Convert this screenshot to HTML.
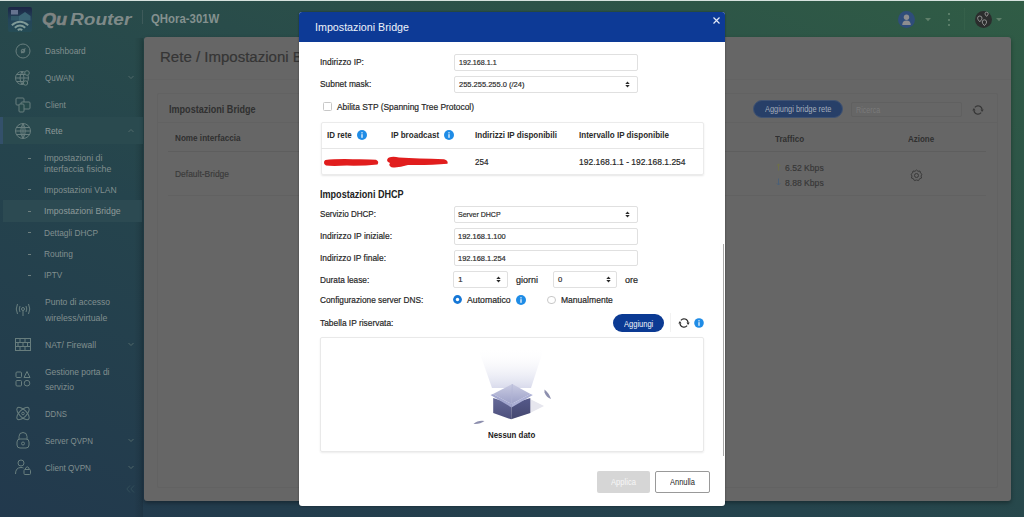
<!DOCTYPE html>
<html><head><meta charset="utf-8">
<style>
*{box-sizing:border-box;margin:0;padding:0}
html,body{width:1024px;height:517px;overflow:hidden;background:#28404a;font-family:"Liberation Sans",sans-serif}
.a{position:absolute;white-space:nowrap;line-height:1;transform-origin:0 0}
.b{position:absolute}
.ico{position:absolute;overflow:visible}
</style></head><body>
<div class="b" style="left:0;top:0;width:1024px;height:517px;background:linear-gradient(205deg,#305c45 0%,#294c4a 40%,#25444d 62%,#22394d 100%)"></div>
<div class="b" style="left:0;top:0;width:1024px;height:1px;background:#d6e2de"></div>
<div class="b" style="left:134px;top:38px;width:9px;height:479px;background:linear-gradient(90deg,rgba(0,0,0,0),rgba(0,0,0,.12))"></div>

<!-- ===== header ===== -->
<svg class="ico" style="left:8px;top:7px" width="25" height="25" viewBox="0 0 25 25">
  <defs><linearGradient id="lg" x1="0" y1="0" x2="0" y2="1"><stop offset="0" stop-color="#1b2545"/><stop offset="0.5" stop-color="#24445a"/><stop offset="1" stop-color="#254c55"/></linearGradient></defs>
  <rect x="0" y="0" width="24" height="25" rx="2" fill="url(#lg)"/>
  <rect x="3" y="3" width="7" height="4.5" fill="#65738f"/>
  <path d="M11 9 L17 5 L22.5 9 L22.5 13.5 L11 13.5Z" fill="#3a6474"/>
  <path d="M3 9 H11 V13.5 H3Z" fill="#335e6c" opacity=".8"/>
  <path d="M3.8 18.2 Q12 11.2 20.2 18.2" stroke="#7f9a98" stroke-width="1.9" fill="none"/>
  <path d="M6.8 20.8 Q12 16.4 17.2 20.8" stroke="#7f9a98" stroke-width="1.9" fill="none"/>
  <path d="M9.8 23.2 Q12 21.2 14.2 23.2" stroke="#7f9a98" stroke-width="1.9" fill="none"/>
</svg>
<div class="a" style="left:41.9px;top:11.7px;font-size:16px;font-style:italic;font-weight:bold;color:#7f8483;-webkit-text-stroke:0.5px #7f8483;transform:scaleX(1.13)">Qu</div>
<div class="a" style="left:69.5px;top:11.7px;font-size:16px;font-style:italic;font-weight:bold;color:#7f8a89;transform:scaleX(1.19)">Router</div>
<div class="b" style="left:142px;top:10px;width:1px;height:14px;background:#3e5a5a"></div>

<svg class="ico" style="left:897px;top:10px" width="20" height="20" viewBox="0 0 20 20">
  <circle cx="9.5" cy="9.5" r="8.5" fill="#2f4d7a"/>
  <circle cx="9.5" cy="7.2" r="2.7" fill="#8d8d8f"/>
  <path d="M5.2 15 Q5.5 10.6 9.5 10.6 Q13.5 10.6 13.8 15Z" fill="#8d8d8f"/>
</svg>
<svg class="ico" style="left:924.5px;top:17.5px" width="6" height="4" viewBox="0 0 6 4"><path d="M0 0H6L3 3.2Z" fill="#5f7f6a"/></svg>
<div class="b" style="left:948px;top:13px;width:2px;height:2px;border-radius:1px;background:#698a74"></div>
<div class="b" style="left:948px;top:18.5px;width:2px;height:2px;border-radius:1px;background:#698a74"></div>
<div class="b" style="left:948px;top:24px;width:2px;height:2px;border-radius:1px;background:#698a74"></div>
<div class="b" style="left:964px;top:8px;width:1px;height:22px;background:#35604a"></div>
<svg class="ico" style="left:974px;top:10px" width="20" height="20" viewBox="0 0 20 20">
  <circle cx="9.5" cy="9.5" r="8.5" fill="#2b2d2d"/>
  <path d="M5.8 11.8 Q3.6 9.6 3.6 8.2 A2.2 2.2 0 0 1 8 8.2 Q8 9.6 5.8 11.8Z" fill="none" stroke="#9c9c9c" stroke-width="0.9"/>
  <path d="M10.4 15.6 Q8.2 13.4 8.2 12 A2.2 2.2 0 0 1 12.6 12 Q12.6 13.4 10.4 15.6Z" fill="none" stroke="#9c9c9c" stroke-width="0.9"/>
  <path d="M12.6 6.4 Q11 4.8 11 3.8 A1.6 1.6 0 0 1 14.2 3.8 Q14.2 4.8 12.6 6.4Z" fill="none" stroke="#9c9c9c" stroke-width="0.9"/>
</svg>
<svg class="ico" style="left:996px;top:17.5px" width="6" height="4" viewBox="0 0 6 4"><path d="M0 0H6L3 3.2Z" fill="#5f7f6a"/></svg>

<div class="a" style="left:151.00px;top:13.40px;font-size:12.7px;color:#84918f;font-weight:bold;transform:scaleX(0.897);">QHora-301W</div>
<!-- ===== sidebar ===== -->
<div class="b" style="left:0;top:117px;width:143px;height:27px;background:#2a4a4f"></div>
<div class="b" style="left:0;top:117px;width:2.5px;height:27px;background:#33506a"></div>
<div class="b" style="left:3px;top:200px;width:139px;height:22px;background:#2c4a52"></div>

<svg class="ico" style="left:14px;top:42px" width="18" height="18" viewBox="0 0 18 18" fill="none" stroke="#687e7e" stroke-width="1">
  <circle cx="9" cy="9" r="7"/><path d="M7 11 L11 6.5 L10 9.5Z"/><circle cx="9" cy="9" r="1.8"/>
</svg>

<svg class="ico" style="left:14px;top:69px" width="18" height="18" viewBox="0 0 18 18" fill="none" stroke="#687e7e" stroke-width="1">
  <circle cx="8" cy="9" r="6.5"/><path d="M1.5 9 H14.5 M8 2.5 Q4 9 8 15.5 M8 2.5 Q12 9 8 15.5 M3 5.5 H13 M3 12.5 H13"/><circle cx="13" cy="4" r="2.3" fill="#274a4b"/><circle cx="11.5" cy="14" r="2.2" fill="#274a4b"/>
</svg>
<svg class="ico" style="left:127px;top:75px" width="8" height="5" viewBox="0 0 8 5" fill="none" stroke="#566c6c" stroke-width="0.9"><path d="M1.5 1 L4 3.5 L6.5 1"/></svg>

<svg class="ico" style="left:14px;top:96px" width="18" height="18" viewBox="0 0 18 18" fill="none" stroke="#687e7e" stroke-width="1">
  <rect x="2" y="2" width="8" height="7" rx="1"/><rect x="7" y="6" width="9" height="7" rx="1" fill="#274a4b"/><rect x="5" y="8" width="5" height="8" rx="1" fill="#274a4b"/>
</svg>

<svg class="ico" style="left:14px;top:122px" width="18" height="18" viewBox="0 0 18 18" fill="none" stroke="#687e7e" stroke-width="1">
  <circle cx="9" cy="9" r="7.5"/><path d="M1.5 9 H16.5 M9 1.5 Q4.5 9 9 16.5 M9 1.5 Q13.5 9 9 16.5 M2.5 5.5 H15.5 M2.5 12.5 H15.5 M9 1.5 V16.5"/>
</svg>
<svg class="ico" style="left:127px;top:128px" width="8" height="5" viewBox="0 0 8 5" fill="none" stroke="#566c6c" stroke-width="0.9"><path d="M1.5 4 L4 1.5 L6.5 4"/></svg>


<svg class="ico" style="left:14px;top:301px" width="18" height="18" viewBox="0 0 18 18" fill="none" stroke="#687e7e" stroke-width="1">
  <circle cx="9" cy="8" r="1.5"/><path d="M9 9.5 V15 M6 5 Q4.5 8 6 11 M12 5 Q13.5 8 12 11 M3.5 3 Q1 8 3.5 13 M14.5 3 Q17 8 14.5 13"/>
</svg>

<svg class="ico" style="left:14px;top:336px" width="18" height="18" viewBox="0 0 18 18" fill="none" stroke="#687e7e" stroke-width="1">
  <rect x="1.5" y="2.5" width="15" height="12"/><path d="M1.5 6.5 H16.5 M1.5 10.5 H16.5 M6 2.5 V6.5 M11 2.5 V6.5 M4 6.5 V10.5 M9 6.5 V10.5 M13.5 6.5 V10.5 M6 10.5 V14.5 M11 10.5 V14.5"/>
</svg>
<svg class="ico" style="left:127px;top:342px" width="8" height="5" viewBox="0 0 8 5" fill="none" stroke="#566c6c" stroke-width="0.9"><path d="M1.5 1 L4 3.5 L6.5 1"/></svg>

<svg class="ico" style="left:14px;top:370px" width="18" height="18" viewBox="0 0 18 18" fill="none" stroke="#687e7e" stroke-width="1">
  <rect x="2" y="2" width="5.5" height="5.5" rx="1"/><path d="M13 1.5 L16 7.5 H10Z"/><rect x="2" y="10.5" width="5.5" height="5.5" rx="1"/><circle cx="13" cy="13.2" r="2.8"/>
</svg>

<svg class="ico" style="left:14px;top:405px" width="18" height="18" viewBox="0 0 18 18" fill="none" stroke="#687e7e" stroke-width="1">
  <ellipse cx="9" cy="8.5" rx="8" ry="3.6" transform="rotate(45 9 8.5)"/><ellipse cx="9" cy="8.5" rx="8" ry="3.6" transform="rotate(-45 9 8.5)"/><circle cx="9" cy="8.5" r="1.3"/>
</svg>

<svg class="ico" style="left:14px;top:431px" width="18" height="18" viewBox="0 0 18 18" fill="none" stroke="#687e7e" stroke-width="1">
  <path d="M5 8 V5.5 Q5 1.5 9 1.5 Q13 1.5 13 5.5 V8"/><rect x="3" y="8" width="12" height="9" rx="3"/><circle cx="9" cy="12.5" r="1.5"/>
</svg>
<svg class="ico" style="left:127px;top:438px" width="8" height="5" viewBox="0 0 8 5" fill="none" stroke="#566c6c" stroke-width="0.9"><path d="M1.5 1 L4 3.5 L6.5 1"/></svg>

<svg class="ico" style="left:14px;top:458px" width="18" height="18" viewBox="0 0 18 18" fill="none" stroke="#687e7e" stroke-width="1">
  <circle cx="7" cy="5" r="3"/><path d="M1.5 16 Q1.5 9.5 7 9.5 Q8.5 9.5 9.5 10"/><rect x="10" y="11.5" width="6.5" height="5" rx="1"/><path d="M11.5 11.5 V10 Q13.2 7.5 15 10 V11.5"/>
</svg>
<svg class="ico" style="left:127px;top:465px" width="8" height="5" viewBox="0 0 8 5" fill="none" stroke="#566c6c" stroke-width="0.9"><path d="M1.5 1 L4 3.5 L6.5 1"/></svg>

<svg class="ico" style="left:126px;top:485px" width="9" height="8" viewBox="0 0 9 8" fill="none" stroke="#34505a" stroke-width="0.9"><path d="M4 0.5 L0.8 4 L4 7.5 M8 0.5 L4.8 4 L8 7.5"/></svg>


<div class="a" style="left:45.00px;top:47.45px;font-size:9px;color:#818f8f;transform:scaleX(0.924);">Dashboard</div>
<div class="a" style="left:45.00px;top:73.75px;font-size:9px;color:#818f8f;transform:scaleX(0.888);">QuWAN</div>
<div class="a" style="left:45.00px;top:100.65px;font-size:9px;color:#818f8f;transform:scaleX(0.904);">Client</div>
<div class="a" style="left:45.00px;top:126.95px;font-size:9px;color:#8e9a9a;transform:scaleX(0.920);">Rete</div>
<div class="a" style="left:43.80px;top:154.05px;font-size:9px;color:#818f8f;transform:scaleX(0.973);">Impostazioni di</div>
<div class="a" style="left:43.80px;top:164.85px;font-size:9px;color:#818f8f;transform:scaleX(0.975);">interfaccia fisiche</div>
<div class="a" style="left:43.80px;top:185.75px;font-size:9px;color:#818f8f;transform:scaleX(0.948);">Impostazioni VLAN</div>
<div class="a" style="left:43.80px;top:207.15px;font-size:9px;color:#8e9a9a;transform:scaleX(0.969);">Impostazioni Bridge</div>
<div class="a" style="left:43.80px;top:228.65px;font-size:9px;color:#818f8f;transform:scaleX(0.923);">Dettagli DHCP</div>
<div class="a" style="left:43.80px;top:249.55px;font-size:9px;color:#818f8f;transform:scaleX(0.931);">Routing</div>
<div class="a" style="left:43.80px;top:271.15px;font-size:9px;color:#818f8f;transform:scaleX(0.904);">IPTV</div>
<div class="a" style="left:45.10px;top:298.05px;font-size:9px;color:#818f8f;transform:scaleX(0.950);">Punto di accesso</div>
<div class="a" style="left:45.10px;top:314.05px;font-size:9px;color:#818f8f;transform:scaleX(0.973);">wireless/virtuale</div>
<div class="a" style="left:45.10px;top:341.05px;font-size:9px;color:#818f8f;transform:scaleX(0.958);">NAT/ Firewall</div>
<div class="a" style="left:45.10px;top:367.85px;font-size:9px;color:#818f8f;transform:scaleX(0.941);">Gestione porta di</div>
<div class="a" style="left:45.10px;top:383.45px;font-size:9px;color:#818f8f;transform:scaleX(0.947);">servizio</div>
<div class="a" style="left:45.10px;top:410.05px;font-size:9px;color:#818f8f;transform:scaleX(0.858);">DDNS</div>
<div class="a" style="left:45.10px;top:437.05px;font-size:9px;color:#818f8f;transform:scaleX(0.879);">Server QVPN</div>
<div class="a" style="left:45.10px;top:463.65px;font-size:9px;color:#818f8f;transform:scaleX(0.901);">Client QVPN</div>
<div class="b" style="left:27.5px;top:157.5px;width:3px;height:1px;background:#6f8080"></div>
<div class="b" style="left:27.5px;top:189.0px;width:3px;height:1px;background:#6f8080"></div>
<div class="b" style="left:27.5px;top:211.0px;width:3px;height:1px;background:#6f8080"></div>
<div class="b" style="left:27.5px;top:232.0px;width:3px;height:1px;background:#6f8080"></div>
<div class="b" style="left:27.5px;top:253.5px;width:3px;height:1px;background:#6f8080"></div>
<div class="b" style="left:27.5px;top:275.0px;width:3px;height:1px;background:#6f8080"></div>
<div class="b" style="left:144px;top:37px;width:867px;height:464px;background:#666;border-radius:3px;box-shadow:0 2px 4px rgba(0,0,0,.35)"></div>
<div class="b" style="left:144px;top:79px;width:867px;height:1px;background:#636363"></div>
<div class="b" style="left:157px;top:93px;width:841px;height:395px;border:1px solid #626262;border-radius:2px"></div>
<div class="b" style="left:158px;top:122px;width:839px;height:1px;background:#626262"></div>
<div class="b" style="left:168px;top:151px;width:818px;height:1px;background:#5e5e5e"></div>
<div class="b" style="left:168px;top:195px;width:818px;height:1px;background:#616161"></div>
<div class="b" style="left:753px;top:100px;width:90px;height:18px;border-radius:9px;background:#273f68;border:1px solid #3f5272"></div>
<div class="b" style="left:850.5px;top:101.5px;width:111px;height:15px;border:1px solid #606060;border-radius:2px"></div>

<svg class="ico" style="left:971.8px;top:103.6px" width="12" height="12" viewBox="0 0 12 12" fill="none" stroke="#363636" stroke-width="1.1">
  <path d="M2.86 3.36 A4.1 4.1 0 0 1 10.08 5.64"/><path d="M9.14 8.64 A4.1 4.1 0 0 1 1.92 6.36"/>
  <path d="M8.5 5.5 L11.7 5.5 L10.1 7.9Z" fill="#363636" stroke="none"/><path d="M0.3 6.5 L3.5 6.5 L1.9 4.1Z" fill="#363636" stroke="none"/>
</svg>
<svg class="ico" style="left:776px;top:163px" width="5" height="8" viewBox="0 0 5 8" fill="none" stroke="#6f7048" stroke-width="1"><path d="M2.5 7.5 V1 M0.8 2.7 L2.5 1 L4.2 2.7"/></svg>
<svg class="ico" style="left:776px;top:177.5px" width="5" height="8" viewBox="0 0 5 8" fill="none" stroke="#4a6078" stroke-width="1"><path d="M2.5 0.5 V7 M0.8 5.3 L2.5 7 L4.2 5.3"/></svg>
<svg class="ico" style="left:910px;top:168.5px" width="13" height="13" viewBox="0 0 13 13" fill="none" stroke="#3a3a3a" stroke-width="1">
  <path d="M6.5 1 L8 2.3 L10 2 L10.4 4 L12 5.3 L11 7 L11.6 9 L9.6 9.7 L8.6 11.6 L6.5 11 L4.4 11.6 L3.4 9.7 L1.4 9 L2 7 L1 5.3 L2.6 4 L3 2 L5 2.3Z"/><circle cx="6.5" cy="6.5" r="2"/>
</svg>

<div class="a" style="left:160.30px;top:48.61px;font-size:15.4px;color:#353535;transform:scaleX(0.976);-webkit-text-stroke:0.2px #353535;">Rete / Impostazioni Bridge</div>
<div class="a" style="left:168.60px;top:105.02px;font-size:10.1px;color:#303030;font-weight:bold;transform:scaleX(0.897);">Impostazioni Bridge</div>
<div class="a" style="left:765.10px;top:105.45px;font-size:9px;color:#a5adbb;transform:scaleX(0.824);">Aggiungi bridge rete</div>
<div class="a" style="left:855.50px;top:105.58px;font-size:8.5px;color:#7a7a7a;transform:scaleX(0.840);">Ricerca</div>
<div class="a" style="left:175.20px;top:134.45px;font-size:9px;color:#303030;font-weight:bold;transform:scaleX(0.904);">Nome interfaccia</div>
<div class="a" style="left:774.70px;top:134.55px;font-size:9px;color:#303030;font-weight:bold;transform:scaleX(0.895);">Traffico</div>
<div class="a" style="left:908.40px;top:134.55px;font-size:9px;color:#303030;font-weight:bold;transform:scaleX(0.888);">Azione</div>
<div class="a" style="left:175.00px;top:169.90px;font-size:9.3px;color:#3a3a3a;-webkit-text-stroke:0.15px #3a3a3a;transform:scaleX(0.909);">Default-Bridge</div>
<div class="a" style="left:785.30px;top:163.13px;font-size:9.5px;color:#363636;-webkit-text-stroke:0.15px #363636;transform:scaleX(0.904);">6.52 Kbps</div>
<div class="a" style="left:785.30px;top:178.03px;font-size:9.5px;color:#363636;-webkit-text-stroke:0.15px #363636;transform:scaleX(0.904);">8.88 Kbps</div>
<div class="b" style="left:299px;top:12px;width:426px;height:494px;background:#fff;border-radius:3px;box-shadow:0 0 2px rgba(0,0,0,.45)"></div>
<div class="b" style="left:299px;top:12px;width:426px;height:30px;background:#0d3a96;border-radius:3px 3px 0 0"></div>

<svg class="ico" style="left:713.4px;top:16.5px" width="7" height="7" viewBox="0 0 7 7" stroke="#e4eaf7" stroke-width="1.2"><path d="M0.5 0.5 L6.5 6.5 M6.5 0.5 L0.5 6.5"/></svg>
<div class="b" style="left:453.5px;top:54px;width:184px;height:16.5px;border:1px solid #e0e0e0;border-radius:2px"></div>
<div class="b" style="left:453.5px;top:76px;width:184px;height:16.5px;border:1px solid #e0e0e0;border-radius:2px"></div>
<svg class="ico" style="left:625px;top:80.6px" width="5" height="7" viewBox="0 0 5 7"><path d="M0.3 2.9 L2.5 0.4 L4.7 2.9Z M0.3 4.1 L2.5 6.6 L4.7 4.1Z" fill="#2a2a2a"/></svg>
<div class="b" style="left:322.5px;top:102px;width:9px;height:9px;border:1px solid #c8c8c8;border-radius:1.5px"></div>

<div class="b" style="left:320.5px;top:121.5px;width:383.5px;height:53.5px;border:1px solid #ebebeb;border-radius:2px;box-shadow:0 1px 2px rgba(0,0,0,.10)"></div>
<div class="b" style="left:321px;top:148px;width:382.5px;height:1px;background:#e6e6e6"></div>
<svg class="ico" style="left:357.3px;top:130px" width="10" height="10" viewBox="0 0 10 10"><circle cx="5" cy="5" r="5" fill="#1f8ce6"/><rect x="4.4" y="4.2" width="1.2" height="3.6" fill="#fff"/><rect x="4.4" y="2.2" width="1.2" height="1.2" fill="#fff"/></svg>
<svg class="ico" style="left:444px;top:130px" width="10" height="10" viewBox="0 0 10 10"><circle cx="5" cy="5" r="5" fill="#1f8ce6"/><rect x="4.4" y="4.2" width="1.2" height="3.6" fill="#fff"/><rect x="4.4" y="2.2" width="1.2" height="1.2" fill="#fff"/></svg>
<svg class="ico" style="left:323px;top:156px" width="58" height="12" viewBox="0 0 58 12"><path d="M2.5 4 Q12 2.8 30 3.2 Q48 3 53 3.8 Q56.5 5.5 54.5 8.5 Q40 10 24 9.6 Q8 10.2 3 9.5 Q0.5 8 1 6 Q1.3 4.5 2.5 4Z" fill="#e11d1d"/></svg>
<svg class="ico" style="left:386px;top:154.5px" width="64" height="14" viewBox="0 0 64 14"><path d="M3 2.5 Q7 0.8 13 2.5 Q32 3.5 58 4.2 Q62.5 5.5 61.5 8.8 Q45 10.3 22 10 Q12 13.2 5.5 12.2 Q2 10.5 4 8 Q0.5 6.5 1.2 4.5 Q1.8 3 3 2.5Z" fill="#e11d1d"/></svg>

<div class="b" style="left:453.5px;top:206px;width:184px;height:16.5px;border:1px solid #e0e0e0;border-radius:2px"></div>
<svg class="ico" style="left:625px;top:210.6px" width="5" height="7" viewBox="0 0 5 7"><path d="M0.3 2.9 L2.5 0.4 L4.7 2.9Z M0.3 4.1 L2.5 6.6 L4.7 4.1Z" fill="#2a2a2a"/></svg>
<div class="b" style="left:453.5px;top:228px;width:184px;height:16.5px;border:1px solid #e0e0e0;border-radius:2px"></div>
<div class="b" style="left:453.5px;top:249.8px;width:184px;height:16.5px;border:1px solid #e0e0e0;border-radius:2px"></div>
<div class="b" style="left:453.3px;top:271.3px;width:54.5px;height:16.5px;border:1px solid #e0e0e0;border-radius:2px"></div>
<svg class="ico" style="left:495.5px;top:276.3px" width="5" height="7" viewBox="0 0 5 7"><path d="M0.3 2.9 L2.5 0.4 L4.7 2.9Z M0.3 4.1 L2.5 6.6 L4.7 4.1Z" fill="#2a2a2a"/></svg>
<div class="b" style="left:553.2px;top:271.3px;width:63.6px;height:16.5px;border:1px solid #e0e0e0;border-radius:2px"></div>
<svg class="ico" style="left:605.5px;top:276.3px" width="5" height="7" viewBox="0 0 5 7"><path d="M0.3 2.9 L2.5 0.4 L4.7 2.9Z M0.3 4.1 L2.5 6.6 L4.7 4.1Z" fill="#2a2a2a"/></svg>

<svg class="ico" style="left:453.2px;top:295.4px" width="9" height="9" viewBox="0 0 9 9"><circle cx="4.5" cy="4.5" r="4.4" fill="#1677d6"/><circle cx="4.5" cy="4.5" r="1.7" fill="#fff"/></svg>
<svg class="ico" style="left:516px;top:294.8px" width="10" height="10" viewBox="0 0 10 10"><circle cx="5" cy="5" r="5" fill="#1f8ce6"/><rect x="4.4" y="4.2" width="1.2" height="3.6" fill="#fff"/><rect x="4.4" y="2.2" width="1.2" height="1.2" fill="#fff"/></svg>
<div class="b" style="left:547px;top:295.5px;width:8.6px;height:8.6px;border-radius:50%;border:1px solid #c8c8c8"></div>

<div class="b" style="left:612.7px;top:314.1px;width:51.8px;height:17.6px;border-radius:9px;background:#0b3a93"></div>
<div class="b" style="left:670.3px;top:313px;width:1px;height:19px;background:#f2f2f2"></div>
<svg class="ico" style="left:678.1px;top:316.9px" width="12" height="12" viewBox="0 0 12 12" fill="none" stroke="#2b2b2b" stroke-width="1.1">
  <path d="M2.86 3.36 A4.1 4.1 0 0 1 10.08 5.64"/><path d="M9.14 8.64 A4.1 4.1 0 0 1 1.92 6.36"/>
  <path d="M8.5 5.5 L11.7 5.5 L10.1 7.9Z" fill="#2b2b2b" stroke="none"/><path d="M0.3 6.5 L3.5 6.5 L1.9 4.1Z" fill="#2b2b2b" stroke="none"/>
</svg>
<svg class="ico" style="left:694.2px;top:318.2px" width="10" height="10" viewBox="0 0 10 10"><circle cx="5" cy="5" r="4.8" fill="#1f8ce6"/><rect x="4.4" y="4.2" width="1.2" height="3.6" fill="#fff"/><rect x="4.4" y="2.2" width="1.2" height="1.2" fill="#fff"/></svg>

<div class="b" style="left:320px;top:337.4px;width:384px;height:115px;border:1px solid #e9e9e9;border-radius:2px;box-shadow:0 1px 2px rgba(0,0,0,.08)"></div>
<svg class="ico" style="left:469px;top:344px" width="90" height="84" viewBox="0 0 90 84">
  <defs>
    <linearGradient id="beam" x1="0" y1="0" x2="0" y2="1"><stop offset="0" stop-color="#ffffff" stop-opacity="0"/><stop offset="1" stop-color="#d9dbec"/></linearGradient>
    <linearGradient id="front" x1="0" y1="0" x2="0" y2="1"><stop offset="0" stop-color="#666a98"/><stop offset="1" stop-color="#4c4f7c"/></linearGradient>
    <linearGradient id="side" x1="0" y1="0" x2="0" y2="1"><stop offset="0" stop-color="#55598a"/><stop offset="1" stop-color="#44476f"/></linearGradient>
    <linearGradient id="inner" x1="0" y1="0" x2="0" y2="1"><stop offset="0" stop-color="#c9cbe2"/><stop offset="1" stop-color="#9da1c8"/></linearGradient>
  </defs>
  <path d="M9 4 H75 L62 44 H23Z" fill="url(#beam)"/>
  <path d="M42 75 L61 69 L75 62 L61 55Z" fill="#e6e6ee"/>
  <path d="M24.2 54 L42.5 60 L42.2 75.3 L24.2 69Z" fill="url(#front)"/>
  <path d="M42.5 60 L61.3 54 L61.3 69 L42.2 75.3Z" fill="url(#side)"/>
  <path d="M43.3 40 L61.5 50 L42.5 60 L24 50Z" fill="url(#inner)"/>
  <path d="M43.3 40 L42.5 60" stroke="#b0b3d3" stroke-width="0.6"/>
  <path d="M21.5 51 L24 50 L42.5 60 L42.5 63.5Z" fill="#a3a7cf"/>
  <path d="M63.8 51 L61.5 50 L42.5 60 L42.5 63.5Z" fill="#abafd5"/>
  <path d="M75.5 45.5 Q80 49 82 55 Q77.5 53.5 75.5 48.5Z" fill="#8d8fae"/>
  <path d="M4.5 80 Q9 76 15.5 77 Q11 80.5 4.5 80Z" fill="#8d8fae"/>
</svg>

<div class="b" style="left:722.6px;top:244px;width:1.2px;height:212px;background:#a8a8a8"></div>

<div class="b" style="left:597px;top:471px;width:53px;height:21.5px;border-radius:2px;background:#d6d6d6"></div>
<div class="b" style="left:655px;top:471px;width:54.5px;height:21.5px;border-radius:2px;border:1px solid #999;background:#fff"></div>

<div class="a" style="left:315.00px;top:22.25px;font-size:11px;color:#eef2fa;transform:scaleX(0.973);">Impostazioni Bridge</div>
<div class="a" style="left:320.10px;top:58.30px;font-size:9.3px;color:#262626;-webkit-text-stroke:0.2px #262626;transform:scaleX(0.904);">Indirizzo IP:</div>
<div class="a" style="left:320.10px;top:79.80px;font-size:9.3px;color:#262626;-webkit-text-stroke:0.2px #262626;transform:scaleX(0.901);">Subnet mask:</div>
<div class="a" style="left:337.00px;top:103.49px;font-size:9.3px;color:#262626;-webkit-text-stroke:0.2px #262626;transform:scaleX(0.903);">Abilita STP (Spanning Tree Protocol)</div>
<div class="a" style="left:327.20px;top:131.09px;font-size:9.3px;color:#2a2a2a;font-weight:bold;transform:scaleX(0.857);">ID rete</div>
<div class="a" style="left:390.70px;top:131.09px;font-size:9.3px;color:#2a2a2a;font-weight:bold;transform:scaleX(0.866);">IP broadcast</div>
<div class="a" style="left:474.60px;top:131.09px;font-size:9.3px;color:#2a2a2a;font-weight:bold;transform:scaleX(0.864);">Indirizzi IP disponibili</div>
<div class="a" style="left:579.30px;top:131.09px;font-size:9.3px;color:#2a2a2a;font-weight:bold;transform:scaleX(0.864);">Intervallo IP disponibile</div>
<div class="a" style="left:474.60px;top:158.40px;font-size:9.3px;color:#262626;-webkit-text-stroke:0.2px #262626;transform:scaleX(0.864);">254</div>
<div class="a" style="left:579.30px;top:158.40px;font-size:9.3px;color:#262626;-webkit-text-stroke:0.2px #262626;transform:scaleX(0.912);">192.168.1.1 - 192.168.1.254</div>
<div class="a" style="left:320.30px;top:188.92px;font-size:10.8px;color:#222;font-weight:bold;transform:scaleX(0.840);">Impostazioni DHCP</div>
<div class="a" style="left:320.20px;top:210.09px;font-size:9.3px;color:#262626;-webkit-text-stroke:0.2px #262626;transform:scaleX(0.867);">Servizio DHCP:</div>
<div class="a" style="left:320.20px;top:232.09px;font-size:9.3px;color:#262626;-webkit-text-stroke:0.2px #262626;transform:scaleX(0.907);">Indirizzo IP iniziale:</div>
<div class="a" style="left:320.20px;top:254.20px;font-size:9.3px;color:#262626;-webkit-text-stroke:0.2px #262626;transform:scaleX(0.901);">Indirizzo IP finale:</div>
<div class="a" style="left:320.20px;top:275.70px;font-size:9.3px;color:#262626;-webkit-text-stroke:0.2px #262626;transform:scaleX(0.891);">Durata lease:</div>
<div class="a" style="left:320.20px;top:295.90px;font-size:9.3px;color:#262626;-webkit-text-stroke:0.2px #262626;transform:scaleX(0.892);">Configurazione server DNS:</div>
<div class="a" style="left:320.20px;top:318.70px;font-size:9.3px;color:#262626;-webkit-text-stroke:0.2px #262626;transform:scaleX(0.901);">Tabella IP riservata:</div>
<div class="a" style="left:458.70px;top:58.95px;font-size:7.7px;color:#333;-webkit-text-stroke:0.2px #262626;transform:scaleX(0.926);">192.168.1.1</div>
<div class="a" style="left:458.50px;top:81.16px;font-size:7.7px;color:#333;-webkit-text-stroke:0.2px #262626;transform:scaleX(0.975);">255.255.255.0 (/24)</div>
<div class="a" style="left:458.20px;top:210.96px;font-size:7.7px;color:#333;-webkit-text-stroke:0.2px #262626;transform:scaleX(0.915);">Server DHCP</div>
<div class="a" style="left:458.20px;top:233.06px;font-size:7.7px;color:#333;-webkit-text-stroke:0.2px #262626;transform:scaleX(0.970);">192.168.1.100</div>
<div class="a" style="left:458.20px;top:255.06px;font-size:7.7px;color:#333;-webkit-text-stroke:0.2px #262626;transform:scaleX(0.970);">192.168.1.254</div>
<div class="a" style="left:458.20px;top:276.25px;font-size:7.7px;color:#333;-webkit-text-stroke:0.2px #262626;">1</div>
<div class="a" style="left:558.00px;top:276.25px;font-size:7.7px;color:#333;-webkit-text-stroke:0.2px #262626;">0</div>
<div class="a" style="left:515.80px;top:275.70px;font-size:9.3px;color:#262626;-webkit-text-stroke:0.2px #262626;transform:scaleX(0.967);">giorni</div>
<div class="a" style="left:624.70px;top:275.70px;font-size:9.3px;color:#262626;-webkit-text-stroke:0.2px #262626;transform:scaleX(0.967);">ore</div>
<div class="a" style="left:466.90px;top:295.90px;font-size:9.3px;color:#262626;-webkit-text-stroke:0.2px #262626;transform:scaleX(0.937);">Automatico</div>
<div class="a" style="left:560.70px;top:295.90px;font-size:9.3px;color:#262626;-webkit-text-stroke:0.2px #262626;transform:scaleX(0.919);">Manualmente</div>
<div class="a" style="left:624.00px;top:319.57px;font-size:8.5px;color:#f2f5fb;transform:scaleX(0.885);">Aggiungi</div>
<div class="a" style="left:488.30px;top:430.37px;font-size:9.8px;color:#222;font-weight:bold;transform:scaleX(0.803);">Nessun dato</div>
<div class="a" style="left:611.00px;top:478.27px;font-size:8.5px;color:#f6f6f6;transform:scaleX(0.896);">Applica</div>
<div class="a" style="left:670.30px;top:478.27px;font-size:8.5px;color:#222;transform:scaleX(0.878);">Annulla</div>
</body></html>
